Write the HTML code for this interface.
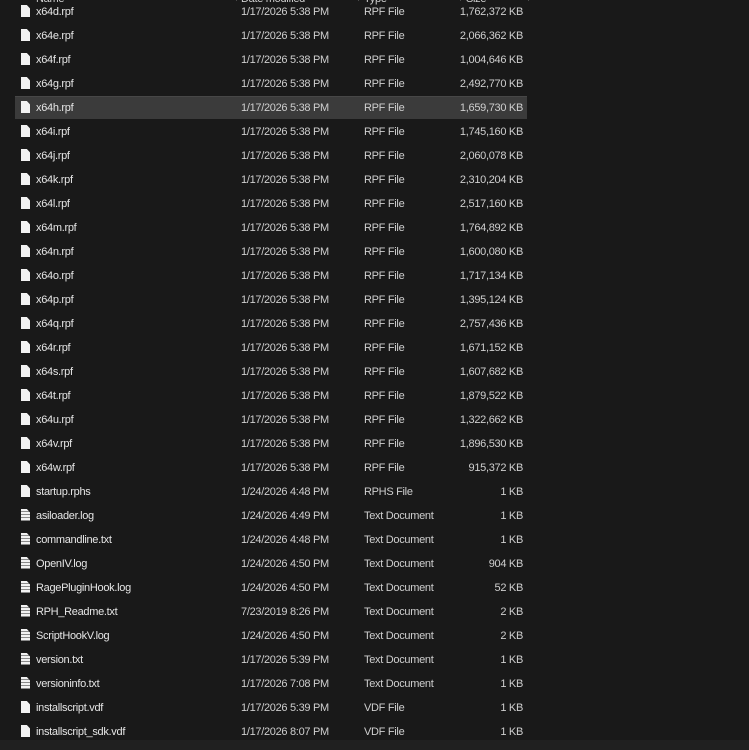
<!DOCTYPE html>
<html><head><meta name="color-scheme" content="dark"><style>
:root{color-scheme:dark}
html,body{margin:0;padding:0;width:749px;height:750px;background:#191919;overflow:hidden;font-family:"Liberation Sans",sans-serif;font-size:11px;color:#dcdcdc}
#wrap{position:absolute;left:0;top:0;width:749px;height:750px;background:#191919}
.hdr{position:absolute;top:-7px;left:0;width:749px;height:12px}
.hdr span{position:absolute;top:0;color:#cfcfcf;letter-spacing:-0.3px}
.vl{position:absolute;top:0;width:1px;height:8px;background:#4a4a4a}
.r{position:absolute;left:15px;width:512px;height:22px}
.r.sel{background:#3b3b3b;border-top:1px solid #474747}
.r span{position:absolute;top:5px;white-space:nowrap;letter-spacing:-0.3px}
.n{left:21px;color:#e6e6e6}
.d{left:226px;color:#cfcfcf}
.t{left:349px;color:#cfcfcf}
.s{right:4px;color:#cfcfcf}
.ic{position:absolute;left:6px;top:4px;width:9px;height:12px;background:#f2f2f2;clip-path:polygon(0 0,65% 0,100% 28%,100% 100%,0 100%)}
.ic.tx{background:repeating-linear-gradient(#f2f2f2 0 2px,#8a8a8a 2px 3px)}
.bot{position:absolute;left:0;top:740px;width:749px;height:10px;background:#202020}
</style></head><body><div id="wrap">
<div class="hdr"><span style="left:36px">Name</span><span style="left:241px">Date modified</span><span style="left:364px">Type</span><span style="left:466px">Size</span>
<div class="vl" style="left:236px"></div><div class="vl" style="left:358px"></div><div class="vl" style="left:460px"></div><div class="vl" style="left:528px"></div></div>
<div class="r" style="top:1px"><i class="ic"></i><span class="n">x64d.rpf</span><span class="d">1/17/2026 5:38 PM</span><span class="t">RPF File</span><span class="s">1,762,372 KB</span></div>
<div class="r" style="top:25px"><i class="ic"></i><span class="n">x64e.rpf</span><span class="d">1/17/2026 5:38 PM</span><span class="t">RPF File</span><span class="s">2,066,362 KB</span></div>
<div class="r" style="top:49px"><i class="ic"></i><span class="n">x64f.rpf</span><span class="d">1/17/2026 5:38 PM</span><span class="t">RPF File</span><span class="s">1,004,646 KB</span></div>
<div class="r" style="top:73px"><i class="ic"></i><span class="n">x64g.rpf</span><span class="d">1/17/2026 5:38 PM</span><span class="t">RPF File</span><span class="s">2,492,770 KB</span></div>
<div class="r sel" style="top:96px"><i class="ic"></i><span class="n">x64h.rpf</span><span class="d">1/17/2026 5:38 PM</span><span class="t">RPF File</span><span class="s">1,659,730 KB</span></div>
<div class="r" style="top:121px"><i class="ic"></i><span class="n">x64i.rpf</span><span class="d">1/17/2026 5:38 PM</span><span class="t">RPF File</span><span class="s">1,745,160 KB</span></div>
<div class="r" style="top:145px"><i class="ic"></i><span class="n">x64j.rpf</span><span class="d">1/17/2026 5:38 PM</span><span class="t">RPF File</span><span class="s">2,060,078 KB</span></div>
<div class="r" style="top:169px"><i class="ic"></i><span class="n">x64k.rpf</span><span class="d">1/17/2026 5:38 PM</span><span class="t">RPF File</span><span class="s">2,310,204 KB</span></div>
<div class="r" style="top:193px"><i class="ic"></i><span class="n">x64l.rpf</span><span class="d">1/17/2026 5:38 PM</span><span class="t">RPF File</span><span class="s">2,517,160 KB</span></div>
<div class="r" style="top:217px"><i class="ic"></i><span class="n">x64m.rpf</span><span class="d">1/17/2026 5:38 PM</span><span class="t">RPF File</span><span class="s">1,764,892 KB</span></div>
<div class="r" style="top:241px"><i class="ic"></i><span class="n">x64n.rpf</span><span class="d">1/17/2026 5:38 PM</span><span class="t">RPF File</span><span class="s">1,600,080 KB</span></div>
<div class="r" style="top:265px"><i class="ic"></i><span class="n">x64o.rpf</span><span class="d">1/17/2026 5:38 PM</span><span class="t">RPF File</span><span class="s">1,717,134 KB</span></div>
<div class="r" style="top:289px"><i class="ic"></i><span class="n">x64p.rpf</span><span class="d">1/17/2026 5:38 PM</span><span class="t">RPF File</span><span class="s">1,395,124 KB</span></div>
<div class="r" style="top:313px"><i class="ic"></i><span class="n">x64q.rpf</span><span class="d">1/17/2026 5:38 PM</span><span class="t">RPF File</span><span class="s">2,757,436 KB</span></div>
<div class="r" style="top:337px"><i class="ic"></i><span class="n">x64r.rpf</span><span class="d">1/17/2026 5:38 PM</span><span class="t">RPF File</span><span class="s">1,671,152 KB</span></div>
<div class="r" style="top:361px"><i class="ic"></i><span class="n">x64s.rpf</span><span class="d">1/17/2026 5:38 PM</span><span class="t">RPF File</span><span class="s">1,607,682 KB</span></div>
<div class="r" style="top:385px"><i class="ic"></i><span class="n">x64t.rpf</span><span class="d">1/17/2026 5:38 PM</span><span class="t">RPF File</span><span class="s">1,879,522 KB</span></div>
<div class="r" style="top:409px"><i class="ic"></i><span class="n">x64u.rpf</span><span class="d">1/17/2026 5:38 PM</span><span class="t">RPF File</span><span class="s">1,322,662 KB</span></div>
<div class="r" style="top:433px"><i class="ic"></i><span class="n">x64v.rpf</span><span class="d">1/17/2026 5:38 PM</span><span class="t">RPF File</span><span class="s">1,896,530 KB</span></div>
<div class="r" style="top:457px"><i class="ic"></i><span class="n">x64w.rpf</span><span class="d">1/17/2026 5:38 PM</span><span class="t">RPF File</span><span class="s">915,372 KB</span></div>
<div class="r" style="top:481px"><i class="ic"></i><span class="n">startup.rphs</span><span class="d">1/24/2026 4:48 PM</span><span class="t">RPHS File</span><span class="s">1 KB</span></div>
<div class="r" style="top:505px"><i class="ic tx"></i><span class="n">asiloader.log</span><span class="d">1/24/2026 4:49 PM</span><span class="t">Text Document</span><span class="s">1 KB</span></div>
<div class="r" style="top:529px"><i class="ic tx"></i><span class="n">commandline.txt</span><span class="d">1/24/2026 4:48 PM</span><span class="t">Text Document</span><span class="s">1 KB</span></div>
<div class="r" style="top:553px"><i class="ic tx"></i><span class="n">OpenIV.log</span><span class="d">1/24/2026 4:50 PM</span><span class="t">Text Document</span><span class="s">904 KB</span></div>
<div class="r" style="top:577px"><i class="ic tx"></i><span class="n">RagePluginHook.log</span><span class="d">1/24/2026 4:50 PM</span><span class="t">Text Document</span><span class="s">52 KB</span></div>
<div class="r" style="top:601px"><i class="ic tx"></i><span class="n">RPH_Readme.txt</span><span class="d">7/23/2019 8:26 PM</span><span class="t">Text Document</span><span class="s">2 KB</span></div>
<div class="r" style="top:625px"><i class="ic tx"></i><span class="n">ScriptHookV.log</span><span class="d">1/24/2026 4:50 PM</span><span class="t">Text Document</span><span class="s">2 KB</span></div>
<div class="r" style="top:649px"><i class="ic tx"></i><span class="n">version.txt</span><span class="d">1/17/2026 5:39 PM</span><span class="t">Text Document</span><span class="s">1 KB</span></div>
<div class="r" style="top:673px"><i class="ic tx"></i><span class="n">versioninfo.txt</span><span class="d">1/17/2026 7:08 PM</span><span class="t">Text Document</span><span class="s">1 KB</span></div>
<div class="r" style="top:697px"><i class="ic"></i><span class="n">installscript.vdf</span><span class="d">1/17/2026 5:39 PM</span><span class="t">VDF File</span><span class="s">1 KB</span></div>
<div class="r" style="top:721px"><i class="ic"></i><span class="n">installscript_sdk.vdf</span><span class="d">1/17/2026 8:07 PM</span><span class="t">VDF File</span><span class="s">1 KB</span></div>
<div class="bot"></div>
</div></body></html>
